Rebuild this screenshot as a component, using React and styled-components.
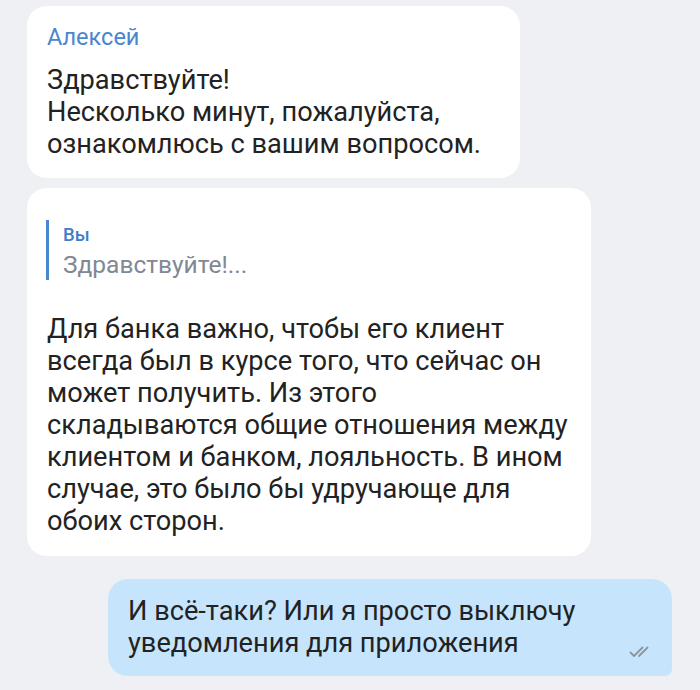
import React from "react";
import styled, { createGlobalStyle } from "styled-components";

const GlobalStyle = createGlobalStyle`
  html, body {
    margin: 0;
    padding: 0;
    background: #eff0f4;
    font-family: Roboto, "Noto Sans", sans-serif;
    -webkit-font-smoothing: antialiased;
  }
`;

const Chat = styled.div`
  display: flex;
  flex-direction: column;
  align-items: flex-start;
  padding: 6px 28px 0 27px;
  width: 700px;
  height: 690px;
  box-sizing: border-box;
  overflow: hidden;
`;

const Bubble = styled.div`
  position: relative;
  box-sizing: border-box;
  width: ${(props) => props.width}px;
  margin-top: ${(props) => props.gap || 0}px;
  align-self: ${(props) => (props.own ? "flex-end" : "flex-start")};
  background: ${(props) => (props.own ? "#c6e5fd" : "#ffffff")};
  border-radius: ${(props) => (props.own ? "20px 20px 7px 20px" : "20px")};
  padding: ${(props) => props.pad || "18px 20px"};
`;

const Author = styled.div`
  font-size: 23.5px;
  line-height: 26px;
  color: #4a86cf;
  margin-bottom: 14px;
`;

const Text = styled.div`
  font-size: 27.2px;
  line-height: 32px;
  color: #222222;
  white-space: nowrap;
`;

const Reply = styled.div`
  display: flex;
  flex-direction: column;
  border-left: 3px solid #4a86cf;
  margin-left: -1px;
  padding-left: 14px;
  margin-bottom: 33px;
`;

const ReplyName = styled.div`
  font-size: 18.5px;
  font-weight: 500;
  line-height: 30px;
  color: #3f7ec9;
`;

const ReplySnippet = styled.div`
  font-size: 24.5px;
  line-height: 30px;
  color: #818894;
`;

const Ticks = styled.svg`
  position: absolute;
  right: 19px;
  bottom: 18px;
`;

const lines = (arr) =>
  arr.map((l, i) => (
    <React.Fragment key={i}>
      {l}
      {i < arr.length - 1 && <br />}
    </React.Fragment>
  ));

const App = () => (
  <>
    <GlobalStyle />
    <Chat>
      <Bubble width={493}>
        <Author>Алексей</Author>
        <Text>
          {lines([
            "Здравствуйте!",
            "Несколько минут, пожалуйста,",
            "ознакомлюсь с вашим вопросом.",
          ])}
        </Text>
      </Bubble>

      <Bubble width={564} gap={10} pad="32px 20px 19px 20px">
        <Reply>
          <ReplyName>Вы</ReplyName>
          <ReplySnippet>Здравствуйте!...</ReplySnippet>
        </Reply>
        <Text>
          {lines([
            "Для банка важно, чтобы его клиент",
            "всегда был в курсе того, что сейчас он",
            "может получить. Из этого",
            "складываются общие отношения между",
            "клиентом и банком, лояльность. В ином",
            "случае, это было бы удручающе для",
            "обоих сторон.",
          ])}
        </Text>
      </Bubble>

      <Bubble own width={564} gap={23} pad="16px 20px 17px 20px">
        <Text>
          {lines([
            "И всё-таки? Или я просто выключу",
            "уведомления для приложения",
          ])}
        </Text>
        <Ticks width="24" height="12" viewBox="0 0 24 12" fill="none">
          <path
            d="M1.5 6.5 L5 10 L13.5 1.5 M10 10 L18.5 1.5"
            stroke="#8f959e"
            strokeWidth="1.8"
            strokeLinecap="round"
            strokeLinejoin="round"
          />
        </Ticks>
      </Bubble>
    </Chat>
  </>
);

export default App;
